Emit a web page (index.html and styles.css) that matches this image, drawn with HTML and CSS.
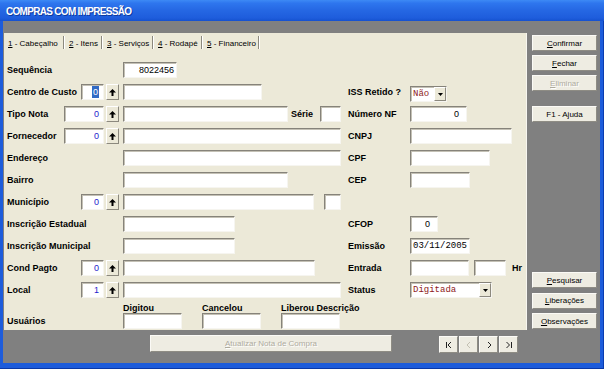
FILE: index.html
```html
<!DOCTYPE html>
<html lang="pt-BR">
<head>
    <meta charset="UTF-8">
    <title>Compras com Impressão</title>
    <link rel="stylesheet" href="styles.css">
</head>
<body>
<div id="window">
    <div class="titlebar">COMPRAS COM IMPRESSÃO</div>
    <div class="client">
        <div class="top">
            <div class="panel">
                <div class="tabs">
                    <div class="tab t1"><u>1</u> - Cabeçalho</div>
                    <div class="tab t2"><u>2</u> - Itens</div>
                    <div class="tab t3"><u>3</u> - Serviços</div>
                    <div class="tab t4"><u>4</u> - Rodapé</div>
                    <div class="tab t5"><u>5</u> - Financeiro</div>
                </div>
                <div class="form">
                    <div class="row">
                        <div class="lab">Sequência</div>
                        <div></div>
                        <div class="fields"><div class="edit num w54">8022456</div></div>
                    </div>
                    <div class="row">
                        <div class="lab">Centro de Custo <div class="edit code"><span class="sel">0</span></div></div>
                        <div><div class="spin"><svg width="7" height="7" viewBox="0 0 7 7"><path d="M3.5 0L7 3.5H4.5V7h-2V3.5H0z"/></svg></div></div>
                        <div class="fields"><div class="edit w139"></div></div>
                        <div class="rlab">ISS Retido ?</div>
                        <div class="fields"><div class="combo w37 low"><span>Não</span><div class="drop"><svg width="5" height="3" viewBox="0 0 5 3"><path d="M0 0h5L2.5 3z"/></svg></div></div></div>
                    </div>
                    <div class="row">
                        <div class="lab">Tipo Nota <div class="edit code wide">0</div></div>
                        <div><div class="spin"><svg width="7" height="7" viewBox="0 0 7 7"><path d="M3.5 0L7 3.5H4.5V7h-2V3.5H0z"/></svg></div></div>
                        <div class="fields"><div class="edit w165"></div><div class="serie">Série</div><div class="edit w21"></div></div>
                        <div class="rlab">Número NF</div>
                        <div class="fields"><div class="edit num pad w57">0</div></div>
                    </div>
                    <div class="row">
                        <div class="lab">Fornecedor <div class="edit code wide">0</div></div>
                        <div><div class="spin"><svg width="7" height="7" viewBox="0 0 7 7"><path d="M3.5 0L7 3.5H4.5V7h-2V3.5H0z"/></svg></div></div>
                        <div class="fields"><div class="edit w218"></div></div>
                        <div class="rlab">CNPJ</div>
                        <div class="fields"><div class="edit w102"></div></div>
                    </div>
                    <div class="row">
                        <div class="lab">Endereço</div>
                        <div></div>
                        <div class="fields"><div class="edit w218"></div></div>
                        <div class="rlab">CPF</div>
                        <div class="fields"><div class="edit w80"></div></div>
                    </div>
                    <div class="row">
                        <div class="lab">Bairro</div>
                        <div></div>
                        <div class="fields"><div class="edit w165"></div></div>
                        <div class="rlab">CEP</div>
                        <div class="fields"><div class="edit w60"></div></div>
                    </div>
                    <div class="row">
                        <div class="lab">Município <div class="edit code">0</div></div>
                        <div><div class="spin"><svg width="7" height="7" viewBox="0 0 7 7"><path d="M3.5 0L7 3.5H4.5V7h-2V3.5H0z"/></svg></div></div>
                        <div class="fields"><div class="edit w191"></div><div class="edit w17 ml10"></div></div>
                    </div>
                    <div class="row">
                        <div class="lab">Inscrição Estadual</div>
                        <div></div>
                        <div class="fields"><div class="edit w112"></div></div>
                        <div class="rlab">CFOP</div>
                        <div class="fields"><div class="edit num pad w28">0</div></div>
                    </div>
                    <div class="row">
                        <div class="lab">Inscrição Municipal</div>
                        <div></div>
                        <div class="fields"><div class="edit w112"></div></div>
                        <div class="rlab">Emissão</div>
                        <div class="fields"><div class="edit mono w60">03/11/2005</div></div>
                    </div>
                    <div class="row">
                        <div class="lab">Cond Pagto <div class="edit code">0</div></div>
                        <div><div class="spin"><svg width="7" height="7" viewBox="0 0 7 7"><path d="M3.5 0L7 3.5H4.5V7h-2V3.5H0z"/></svg></div></div>
                        <div class="fields"><div class="edit w192"></div></div>
                        <div class="rlab">Entrada</div>
                        <div class="fields"><div class="edit w59"></div><div class="edit w32 ml5"></div><div class="hr">Hr</div></div>
                    </div>
                    <div class="row">
                        <div class="lab">Local <div class="edit code">1</div></div>
                        <div><div class="spin"><svg width="7" height="7" viewBox="0 0 7 7"><path d="M3.5 0L7 3.5H4.5V7h-2V3.5H0z"/></svg></div></div>
                        <div class="fields"><div class="edit w218"></div></div>
                        <div class="rlab">Status</div>
                        <div class="fields"><div class="combo w82"><span>Digitada</span><div class="drop"><svg width="5" height="3" viewBox="0 0 5 3"><path d="M0 0h5L2.5 3z"/></svg></div></div></div>
                    </div>
                    <div class="row users">
                        <div class="lab">Usuários</div>
                        <div></div>
                        <div class="fields">
                            <div class="user"><div class="ulab">Digitou</div><div class="edit"></div></div>
                            <div class="user"><div class="ulab">Cancelou</div><div class="edit"></div></div>
                            <div class="user"><div class="ulab">Liberou Descrição</div><div class="edit"></div></div>
                        </div>
                    </div>
                </div>
            </div>
            <div class="side">
                <div class="btn"><u>C</u>onfirmar</div>
                <div class="btn"><u>F</u>echar</div>
                <div class="btn off"><u>E</u>liminar</div>
                <div class="btn help">F1 - Ajuda</div>
                <div class="bottom-group">
                    <div class="btn"><u>P</u>esquisar</div>
                    <div class="btn"><u>L</u>iberações</div>
                    <div class="btn"><u>O</u>bservações</div>
                </div>
            </div>
        </div>
        <div class="footer">
            <div class="btn off update"><u>A</u>tualizar Nota de Compra</div>
            <div class="nav">
                <div class="btn"><svg width="8" height="8" viewBox="0 0 8 8"><path d="M1.5 1v6M6 1L3 4l3 3" stroke="#222" fill="none"/></svg></div>
                <div class="btn"><svg width="8" height="8" viewBox="0 0 8 8"><path d="M5 1L2 4l3 3" stroke="#c3c0b2" fill="none"/></svg></div>
                <div class="btn"><svg width="8" height="8" viewBox="0 0 8 8"><path d="M3 1l3 3-3 3" stroke="#222" fill="none"/></svg></div>
                <div class="btn"><svg width="8" height="8" viewBox="0 0 8 8"><path d="M1.5 1l3 3-3 3M6.5 1v6" stroke="#222" fill="none"/></svg></div>
            </div>
        </div>
    </div>
</div>
</body>
</html>
```

FILE: styles.css
```css
*{
    margin: 0;
    padding: 0;
    box-sizing: border-box;
}
body{
    background: #808080;
    font-family: "Liberation Sans", Arial, sans-serif;
    color: #000;
}
#window{
    width: 604px;
    height: 369px;
    display: flex;
    flex-direction: column;
    background: #1d5cdb;
    box-shadow: inset 0 -1px 0 #0a38a6, inset -1px 0 0 #0a3cb0;
}
.titlebar{
    height: 21px;
    padding: 2px 0 0 6px;
    line-height: 19px;
    font-size: 10px;
    font-weight: bold;
    letter-spacing: -0.7px;
    color: #fff;
    text-shadow: 1px 1px 0 #0d3a9e;
    background: linear-gradient(to bottom, #3d8af5 0%, #2e76ee 15%, #2567e3 50%, #1e5ddc 85%, #1551cf 100%);
}
.client{
    flex: 1;
    margin: 0 4px 6px 3px;
    background: #808080;
    padding-top: 12px;
}
.top{
    display: flex;
    height: 297px;
}
.panel{
    width: 523px;
    margin-left: 1px;
    background: #ece9d8;
    box-shadow: inset -1px 0 0 #f7f6f0;
}

/* tabs */
.tabs{
    display: flex;
    height: 18px;
    font-size: 8px;
}
.tab{
    margin-top: 3px;
    height: 13px;
    line-height: 13px;
    padding: 1px 0 0 5px;
    border-right: 1px solid #8c897e;
    box-shadow: 1px 0 0 #fff;
    white-space: nowrap;
}
.t1{ width: 60px; padding-left: 4px; }
.t2{ width: 38px; }
.t3{ width: 51px; }
.t4{ width: 49px; }
.t5{ width: 57px; }

/* form rows */
.form{
    padding: 11px 0 0 3px;
}
.row{
    display: grid;
    grid-template-columns: 99px 17px 224px 63px 1fr;
    height: 22px;
}
.lab, .rlab, .serie, .hr, .ulab{
    font-size: 9px;
    font-weight: bold;
    line-height: 16px;
    white-space: nowrap;
}
.lab{
    display: flex;
    justify-content: space-between;
    padding-right: 2px;
}
.rlab{
    padding-left: 1px;
}
.fields{
    display: flex;
    align-items: flex-start;
}
.edit{
    height: 16px;
    background: #fff;
    border-style: solid;
    border-width: 1px;
    border-color: #86837a #f6f5f0 #f6f5f0 #86837a;
    box-shadow: inset 1px 1px 0 #c4c1b5;
    font-size: 9px;
    line-height: 14px;
    padding: 0 2px;
    white-space: nowrap;
    overflow: hidden;
}
.num{ text-align: right; }
.pad{ padding-right: 7px; }
.mono{
    font-family: "Liberation Mono", "Courier New", monospace;
    padding-left: 2px;
}
.code{
    width: 23px;
    text-align: right;
    padding-right: 4px;
    color: #1e1ecc;
    font-weight: normal;
}
.code.wide{ width: 40px; }
.sel{
    background: #316ac5;
    color: #fff;
    padding: 1px 1px;
}
.w17{ width: 17px; }
.w21{ width: 21px; }
.w28{ width: 28px; }
.w32{ width: 32px; }
.w37{ width: 37px; }
.w54{ width: 54px; }
.w57{ width: 57px; }
.w59{ width: 59px; }
.w60{ width: 60px; }
.w80{ width: 80px; }
.w82{ width: 82px; }
.w102{ width: 102px; }
.w112{ width: 112px; }
.w139{ width: 139px; }
.w165{ width: 165px; }
.w191{ width: 191px; }
.w192{ width: 192px; }
.w218{ width: 218px; }
.ml5{ margin-left: 5px; }
.ml10{ margin-left: 10px; }
.serie{
    width: 32px;
    padding-left: 3px;
}
.hr{
    margin-left: 6px;
}

/* spin button and combo */
.spin{
    width: 13px;
    height: 16px;
    display: flex;
    align-items: center;
    justify-content: center;
    background: #ece9d8;
    border: 1px solid;
    border-color: #fff #8c897e #8c897e #fff;
}
.spin svg{ fill: #000; }
.combo{
    height: 16px;
    display: flex;
    justify-content: space-between;
    background: #fff;
    border-style: solid;
    border-width: 1px;
    border-color: #86837a #f6f5f0 #f6f5f0 #86837a;
    box-shadow: inset 1px 1px 0 #c4c1b5;
    font-family: "Liberation Mono", "Courier New", monospace;
    font-size: 9px;
    line-height: 14px;
    color: #8e1a1a;
    padding-left: 2px;
}
.combo.low{ margin-top: 2px; }
.drop{
    width: 12px;
    height: 14px;
    display: flex;
    align-items: center;
    justify-content: center;
    background: #ece9d8;
    border: 1px solid;
    border-color: #fff #8c897e #8c897e #fff;
}
.drop svg{ fill: #000; }

/* users */
.users .lab{
    margin-top: 9px;
}
.users .fields{
    gap: 20px;
}
.user{
    width: 59px;
}
.ulab{
    line-height: 9px;
}

/* side buttons */
.side{
    width: 65px;
    margin-left: 5px;
    display: flex;
    flex-direction: column;
    gap: 4px;
    padding: 2px 0 1px;
}
.btn{
    height: 16px;
    display: flex;
    align-items: center;
    justify-content: center;
    background: #eeece2;
    border: 1px solid;
    border-color: #fbfaf6 #8e8c84 #8e8c84 #fbfaf6;
    font-size: 8px;
    white-space: nowrap;
}
.btn.off{
    color: #aeab9e;
    text-shadow: 1px 1px 0 #fff;
}
.help{
    margin-top: 11px;
}
.bottom-group{
    margin-top: auto;
    display: flex;
    flex-direction: column;
    gap: 4.5px;
}

/* footer */
.footer{
    display: flex;
    margin-top: 5px;
}
.update{
    width: 242px;
    height: 17px;
    margin-left: 147px;
}
.nav{
    display: flex;
    gap: 1px;
    margin-left: 47px;
    margin-top: 1px;
}
.nav .btn{
    width: 19px;
    height: 17px;
}
```
